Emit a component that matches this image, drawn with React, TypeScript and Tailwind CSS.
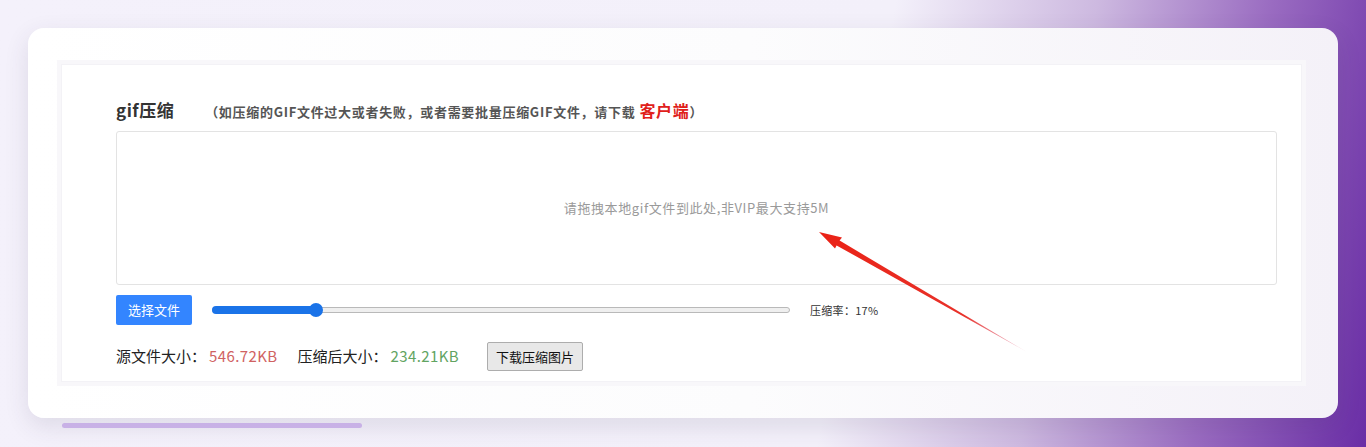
import React from "react";

const font = {fontFamily: '"Microsoft YaHei", "Noto Sans CJK SC", "Noto Sans", sans-serif'};

const Slider = ({value}: {value: number}) => (
    <div className="relative w-[578px] h-[14px] flex items-center">
        <div className="w-full h-[6px] rounded-full border border-[#b9b9b9] bg-[#efefef]"/>
        <div className="absolute left-0 h-[8px] rounded-full bg-[#1a73e8]" style={{width: `${value}%`}}/>
        <div className="absolute w-[14px] h-[14px] rounded-full bg-[#1a73e8] -translate-x-1/2"
             style={{left: `${value}%`}}/>
    </div>
);

const Arrow = () => (
    <svg className="absolute inset-0 pointer-events-none" width="1366" height="447">
        <defs>
            <linearGradient id="arr" x1="819" y1="232" x2="1027" y2="352" gradientUnits="userSpaceOnUse">
                <stop offset="0" stopColor="#ea2216"/>
                <stop offset="0.7" stopColor="#e8322a"/>
                <stop offset="1" stopColor="#e07090" stopOpacity="0.4"/>
            </linearGradient>
        </defs>
        <polygon points="819,232 842,237.5 839.6,240.6 1027,352 836.6,245.4 835,248.6" fill="url(#arr)"/>
    </svg>
);

export default function App() {
    return (
        <div style={font}
             className="relative w-full h-[447px] overflow-hidden bg-[linear-gradient(100deg,#f4f1fb_0%,#f3f0fa_62%,#cdb9e0_76%,#9a6cc1_88%,#6a2ea6_100%)]">
            <div className="pt-[28px] px-[28px]">
                <div className="h-[390px] rounded-[16px] pt-[32px] pl-[29px] bg-[linear-gradient(90deg,#ffffff_0%,#fcfcfd_55%,#f4f1f8_100%)] shadow-[0_8px_24px_rgba(60,50,80,0.12)]">
                    <div className="w-[1249px] h-[326px] border-[4px] border-[#f8f7fa] bg-white">
                        <div className="h-full border border-[#f3f2f6] pl-[54px] pt-[33px]">
                            <div className="flex items-center h-[24px]">
                                <span className="text-[17px] tracking-[0.5px] font-bold text-[#333]">gif压缩</span>
                                <span className="ml-[31px] text-[13px] tracking-[0.7px] font-bold text-[#555]">
                                    （如压缩的GIF文件过大或者失败，或者需要批量压缩GIF文件，请下载
                                    <span className="ml-[4px] text-[16px] text-[#e0201a]">客户端</span>）
                                </span>
                            </div>

                            <div className="mt-[9px] w-[1161px] h-[154px] border border-[#e3e3e3] rounded-[3px] flex items-center justify-center">
                                <span className="text-[13px] tracking-[0.6px] text-[#9a9a9a]">
                                    请拖拽本地gif文件到此处,非VIP最大支持5M
                                </span>
                            </div>

                            <div className="mt-[10px] flex items-center h-[30px]">
                                <button className="w-[76px] h-[30px] rounded-[2px] bg-[#3385ff] text-white text-[13px]">
                                    选择文件
                                </button>
                                <div className="ml-[20px]">
                                    <Slider value={18}/>
                                </div>
                                <span className="ml-[20px] text-[11px] tracking-[0.3px] text-[#333]">压缩率：17%</span>
                            </div>

                            <div className="mt-[17px] flex items-center h-[29px] text-[15px]">
                                <span className="text-[#222]">源文件大小：</span>
                                <span className="ml-[3px] tracking-[0.4px] text-[#d06262]">546.72KB</span>
                                <span className="ml-[20px] text-[#222]">压缩后大小：</span>
                                <span className="ml-[3px] tracking-[0.4px] text-[#62a462]">234.21KB</span>
                                <button className="ml-[28px] w-[96px] h-[29px] bg-[#e8e8e8] border border-[#adadad] rounded-[2px] text-[13px] text-[#111]">
                                    下载压缩图片
                                </button>
                            </div>
                        </div>
                    </div>
                </div>
                <div className="mt-[5px] ml-[34px] w-[300px] h-[5px] rounded-full bg-[#c8b1e6]"/>
            </div>
            <Arrow/>
        </div>
    );
}
